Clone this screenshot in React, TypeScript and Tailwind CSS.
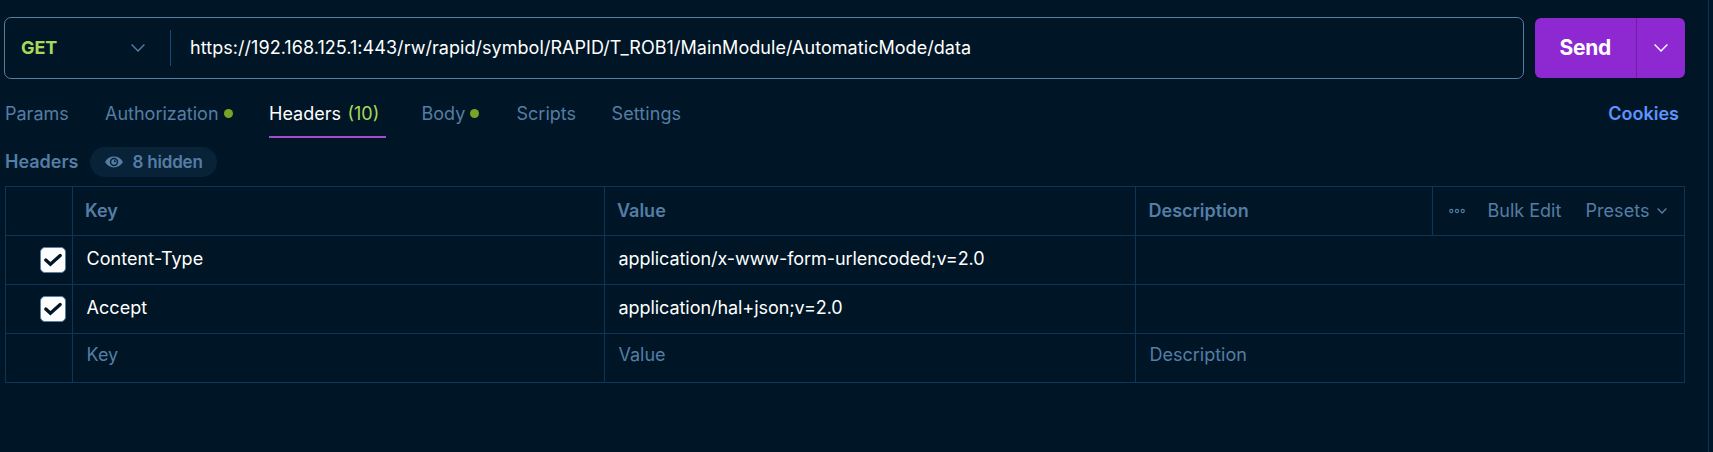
import React from "react";

const Chevron = ({ w, h, className }: { w: number; h: number; className?: string }) => (
  <svg width={w} height={h} viewBox={`0 0 ${w} ${h}`} fill="none" stroke="currentColor" strokeWidth="1.4" className={className}>
    <path d={`M0.6 0.6 L${w / 2} ${h - 1.1} L${w - 0.6} 0.6`} />
  </svg>
);

const Check = () => (
  <div className="flex h-[26px] w-[26px] items-center justify-center rounded-[5px] border border-[#5a7fa5] bg-[#fdfdfd]">
    <svg width="20" height="16" viewBox="0 0 20 16" fill="none" stroke="#001626" strokeWidth="3.3" strokeLinecap="round">
      <path d="M2.8 8 L7.4 12.2 L17.2 3.6" />
    </svg>
  </div>
);

const Dot = () => <span className="h-[9px] w-[9px] rounded-full bg-[#76a627]" />;

const rows = [
  { key: "Content-Type", value: "application/x-www-form-urlencoded;v=2.0" },
  { key: "Accept", value: "application/hal+json;v=2.0" },
];

const cols = "grid grid-cols-[67px_532px_531px_1fr]";
const cell = "border-r border-[#0d3557] pl-[13.5px]";

export default function App() {
  return (
    <div className="flex h-[452px] w-[1713px] overflow-hidden bg-[#001626] font-['Inter',sans-serif] text-[18px] leading-[24px] text-[#557da5]">
      <div className="flex w-[1709px] flex-col border-r border-[#0d3557] pl-1 pt-[17px]">
        <div className="flex">
          <div className="flex h-[62px] w-[1520px] items-center rounded-[7px] border border-[#5a7d9c]">
            <span className="w-[110px] pl-[16px] font-bold tracking-[-0.1px] text-[#a8d95c]">GET</span>
            <Chevron w={14} h={8} className="ml-[16px]" />
            <span className="ml-[25px] h-[36px] w-px bg-[#174a78]" />
            <span className="ml-[19px] tracking-[0.05px] text-white">https://192.168.125.1:443/rw/rapid/symbol/RAPID/T_ROB1/MainModule/AutomaticMode/data</span>
          </div>
          <div className="ml-[11px] mt-px flex h-[60px] w-[150px] overflow-hidden rounded-[6px] bg-[#8e28d0] text-white">
            <span className="flex w-[102px] items-center border-r border-[#6d1fa3] pl-[24.5px] text-[21px] font-bold tracking-[-0.3px]">Send</span>
            <span className="flex items-center pl-[17px]"><Chevron w={14} h={8} /></span>
          </div>
        </div>

        <div className="mt-[19px] flex h-[40px] pl-px">
          <span className="w-[100px] pt-[4px]">Params</span>
          <span className="flex h-[31px] w-[164px] items-center gap-[5px]">Authorization<Dot /></span>
          <span className="h-[40px] w-[117px] whitespace-pre border-b-2 border-[#a24cd2] pt-[4px] text-white">Headers<span className="ml-[6.5px] text-[#a8d95c]">(10)</span></span>
          <span className="ml-[35.5px] flex h-[31px] w-[95px] items-center gap-[5px]">Body<Dot /></span>
          <span className="w-[95px] pt-[4px]">Scripts</span>
          <span className="pt-[4px] tracking-[0.1px]">Settings</span>
          <span className="ml-auto mr-[29px] pt-[4px] font-semibold text-[#5f93ff]">Cookies</span>
        </div>

        <div className="mt-[9px] flex h-[30px] items-center pl-px font-semibold">
          <span className="w-[85px]">Headers</span>
          <span className="flex h-[30px] w-[127px] items-center rounded-full bg-[#082338] pl-[15px] text-[17px]">
            <svg width="18" height="12" viewBox="0 0 18 12" fill="currentColor">
              <path fillRule="evenodd" d="M0 6 C4 -1.2 14 -1.2 18 6 C14 13.2 4 13.2 0 6Z M9 1.8 A4.2 4.2 0 1 0 9 10.2 A4.2 4.2 0 1 0 9 1.8Z" />
              <circle cx="9" cy="6" r="2.7" />
              <circle cx="9.8" cy="5.2" r="1" fill="#082338" />
            </svg>
            <span className="ml-[9.5px] tracking-[-0.2px]">8 hidden</span>
          </span>
        </div>

        <div className="ml-px mt-[9px] w-[1680px] border-l border-t border-[#0d3557]">
          <div className="grid h-[49px] grid-cols-[67px_532px_531px_297px_1fr] border-b border-[#0d3557] font-semibold leading-[48px]">
            <span className="border-r border-[#0d3557]" />
            <span className="border-r border-[#0d3557] pl-[12px]">Key</span>
            <span className="border-r border-[#0d3557] pl-[12px]">Value</span>
            <span className="border-r border-[#0d3557] pl-[12.5px]">Description</span>
            <span className="flex items-center border-r border-[#0d3557] pl-[16px] font-normal">
              <svg width="16" height="6" viewBox="0 0 16 6" fill="none" stroke="currentColor" strokeWidth="1.1">
                <circle cx="2.3" cy="3" r="1.6" />
                <circle cx="8" cy="3" r="1.6" />
                <circle cx="13.7" cy="3" r="1.6" />
              </svg>
              <span className="ml-[22.5px] w-[98px]">Bulk Edit</span>
              <span className="tracking-[0.05px]">Presets</span>
              <Chevron w={10} h={6} className="ml-[7.5px]" />
            </span>
          </div>
          {rows.map((r) => (
            <div key={r.key} className={`${cols} h-[49px] border-b border-[#0d3557] leading-[46px] text-white`}>
              <span className="flex items-center border-r border-[#0d3557] pl-[34px]"><Check /></span>
              <span className={`${cell} tracking-[0.06px]`}>{r.key}</span>
              <span className={`${cell} tracking-[-0.06px]`}>{r.value}</span>
              <span className={cell} />
            </div>
          ))}
          <div className={`${cols} h-[49px] border-b border-[#0d3557] leading-[42px]`}>
            <span className="border-r border-[#0d3557]" />
            <span className={cell}>Key</span>
            <span className={cell}>Value</span>
            <span className={cell}>Description</span>
          </div>
        </div>
      </div>
    </div>
  );
}
